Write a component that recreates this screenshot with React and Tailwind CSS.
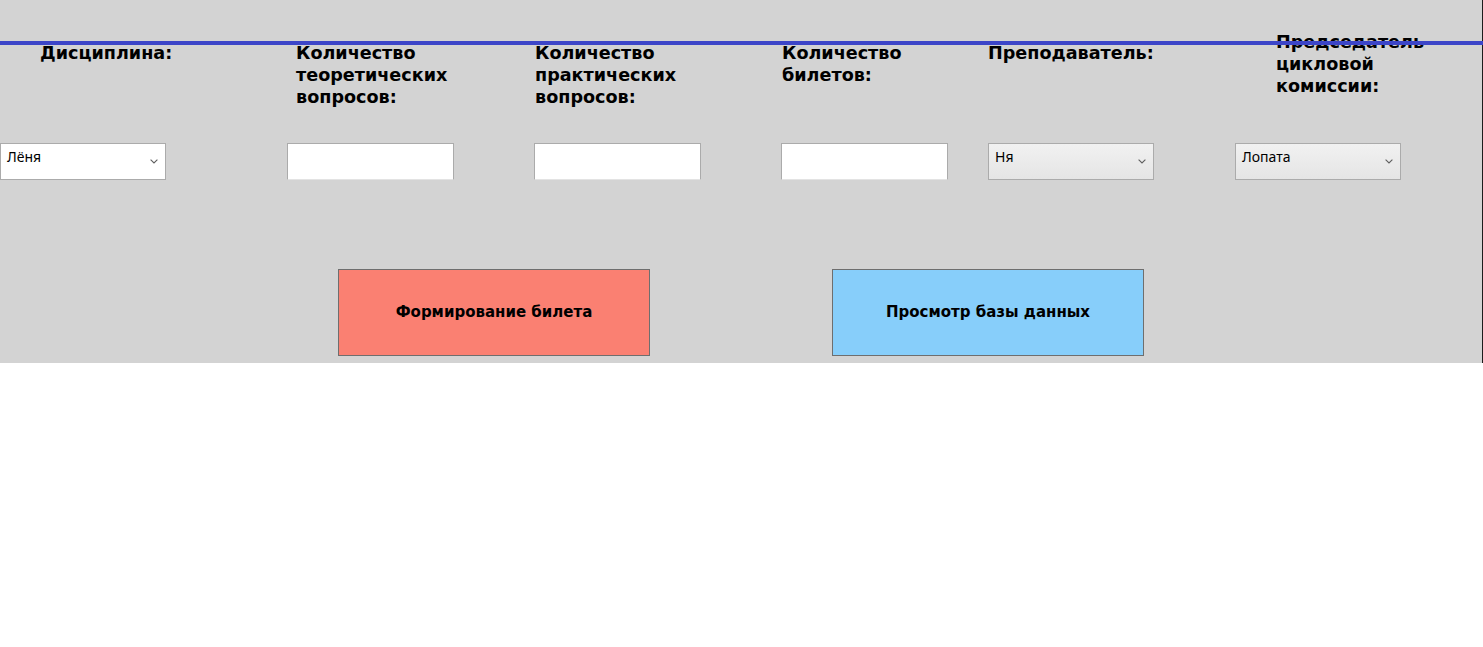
import { useState } from "react";

const columns = [
  { w: "w-[287px]", pl: "pl-[40px]", label: "Дисциплина:", kind: "select", value: "Лёня", tone: "white" },
  { w: "w-[247px]", pl: "pl-[9px]", label: "Количество теоретических вопросов:", kind: "input" },
  { w: "w-[247px]", pl: "pl-[1px]", label: "Количество практических вопросов:", kind: "input" },
  { w: "w-[207px]", pl: "pl-[1px]", label: "Количество билетов:", kind: "input" },
  { w: "w-[247px]", pl: "pl-0", label: "Преподаватель:", kind: "select", value: "Ня", tone: "grey" },
  { w: "w-[247px]", pl: "pl-[41px]", label: "Председатель цикловой комиссии:", kind: "select", value: "Лопата", tone: "grey", up: true },
];

const Chevron = () => (
  <svg className="w-[8px] h-[5px]" viewBox="0 0 8 5" fill="none" stroke="#5f5f5f" strokeWidth="1.1">
    <path d="M0.6 0.6 L4 4 L7.4 0.6" />
  </svg>
);

const FakeSelect = ({ value, tone }) => (
  <div
    className={`relative w-[166px] h-[37px] border border-[#ababab] pl-[6px] pt-[4px] text-[14px] leading-[18px] text-black font-['Noto_Sans',sans-serif] cursor-default ${
      tone === "white" ? "bg-white" : "bg-gradient-to-b from-[#f1f1f1] to-[#e5e5e5]"
    }`}
  >
    {value}
    <span className="absolute right-[7px] top-[15px]">
      <Chevron />
    </span>
  </div>
);

const Field = () => {
  const [val, setVal] = useState("");
  return (
    <input
      value={val}
      onChange={(e) => setVal(e.target.value)}
      className="w-[167px] h-[37px] bg-white border border-[#ababab] border-b-[#e3e3e3] outline-none px-1 text-[14px]"
    />
  );
};

export default function App() {
  return (
    <div className="min-h-screen bg-white">
      <div className="relative h-[363px] bg-[#d3d3d3] border-r border-[#1c1c1c] pt-[42px]">
        {/* blue rule over the header */}
        <div className="absolute left-0 right-[-1px] top-[41px] h-[4px] bg-[#3c45c8]" />

        <div className="flex">
          {columns.map((c, i) => (
            <div key={i} className={`${c.w} shrink-0 flex flex-col`}>
              <div className={`h-[101px] ${c.pl} ${c.up ? "-mt-[11px] mb-[11px]" : ""}`}>
                <p className="w-[165px] text-[17.6px] leading-[22px] font-bold text-black font-['DejaVu_Sans',sans-serif]">
                  {c.label}
                </p>
              </div>
              {c.kind === "select" ? <FakeSelect value={c.value} tone={c.tone} /> : <Field />}
            </div>
          ))}
        </div>

        <div className="flex gap-[182px] pl-[338px] mt-[89px]">
          <button className="w-[312px] h-[87px] bg-[#fa8072] border border-[#6e6e6e] text-[15px] font-bold text-black font-['DejaVu_Sans',sans-serif]">
            Формирование билета
          </button>
          <button className="w-[312px] h-[87px] bg-[#87cefa] border border-[#6e6e6e] text-[15px] font-bold text-black font-['DejaVu_Sans',sans-serif]">
            Просмотр базы данных
          </button>
        </div>
      </div>
    </div>
  );
}
